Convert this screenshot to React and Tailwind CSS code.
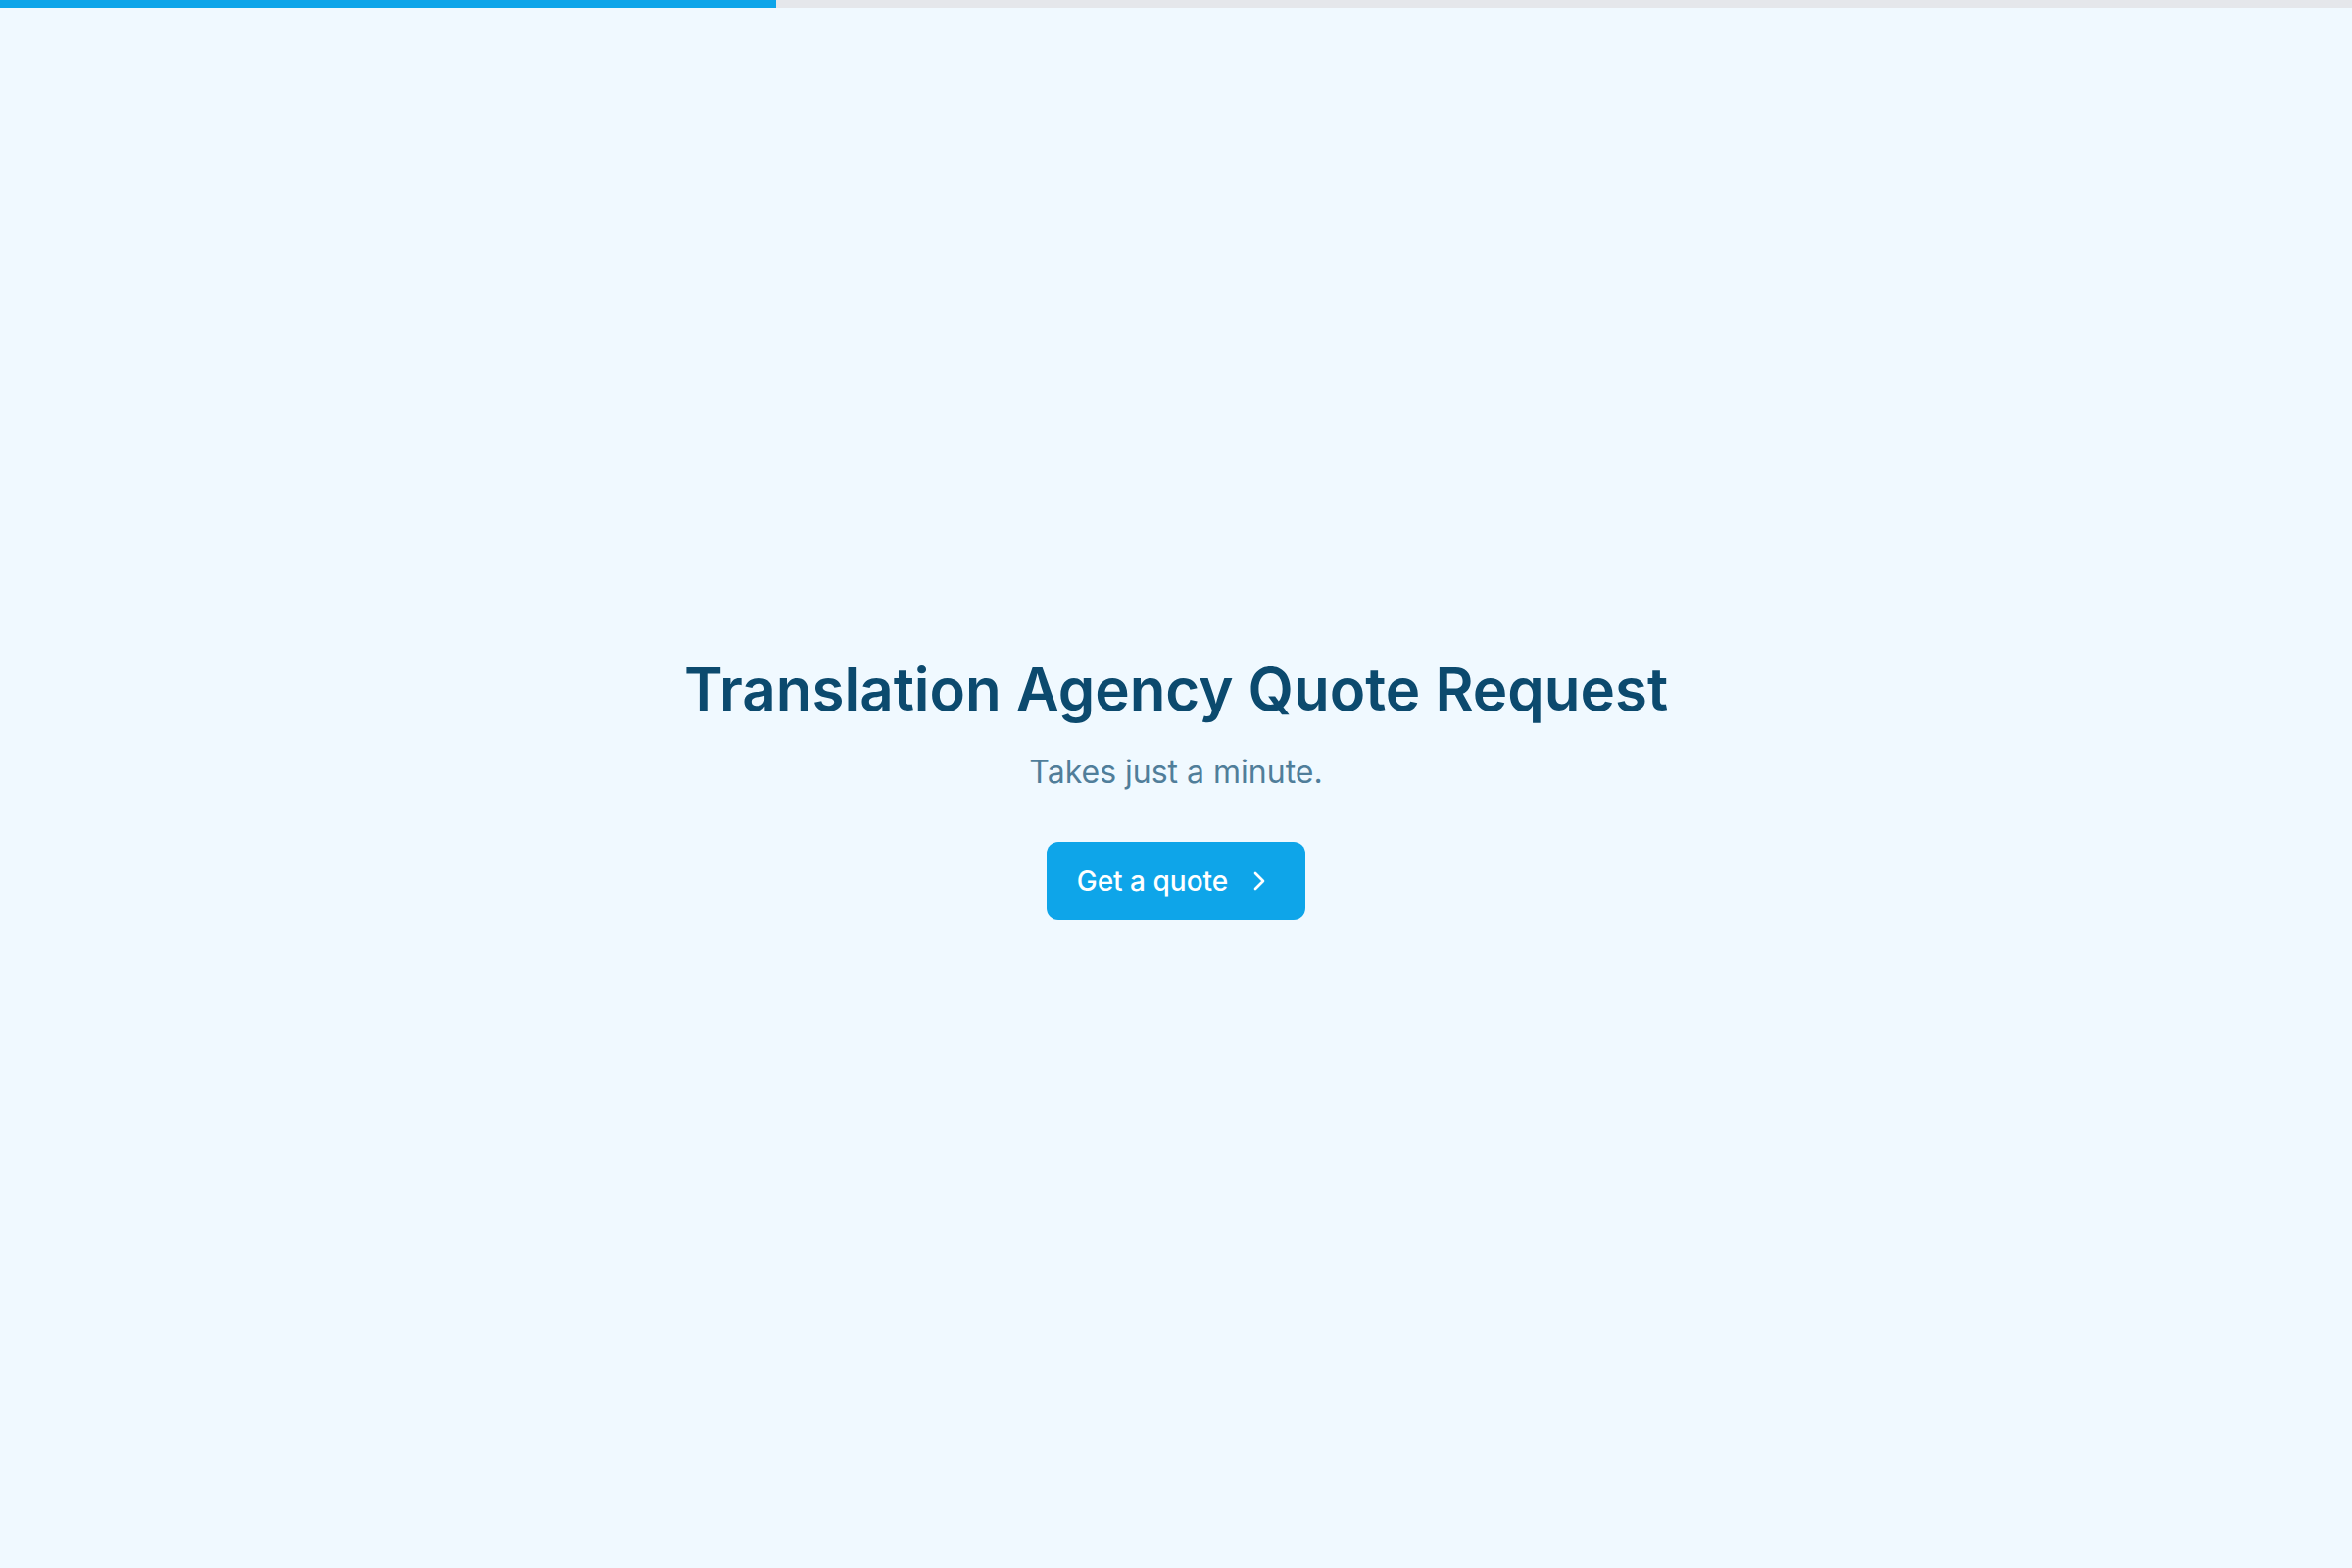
import React from "react";
import { ChevronRight } from "lucide-react";

export default function App() {
  const progress = 33;
  return (
    <div
      className="min-h-screen flex flex-col bg-[#f0f9ff]"
      style={{ fontFamily: "Inter, 'Noto Sans', sans-serif" }}
    >
      {/* step progress */}
      <div className="h-2 w-full bg-[#e5e7eb]">
        <div className="h-full bg-[#0ea5e9]" style={{ width: `${progress}%` }} />
      </div>

      <main className="flex-1 flex flex-col items-center justify-center pt-[4px]">
        <h1 className="text-[60px] leading-none font-semibold text-[#0c4a6e]">
          Translation Agency Quote Request
        </h1>
        <p className="mt-[39px] text-[32px] leading-none text-[#507e9a]">
          Takes just a minute.
        </p>
        <button
          type="button"
          className="mt-[55px] h-[80px] w-[264px] flex items-center justify-center gap-4 rounded-[12px] bg-[#0ea5e9] text-white text-[28px] font-medium"
        >
          <span>Get a quote</span>
          <ChevronRight size={32} strokeWidth={2} />
        </button>
      </main>
    </div>
  );
}
